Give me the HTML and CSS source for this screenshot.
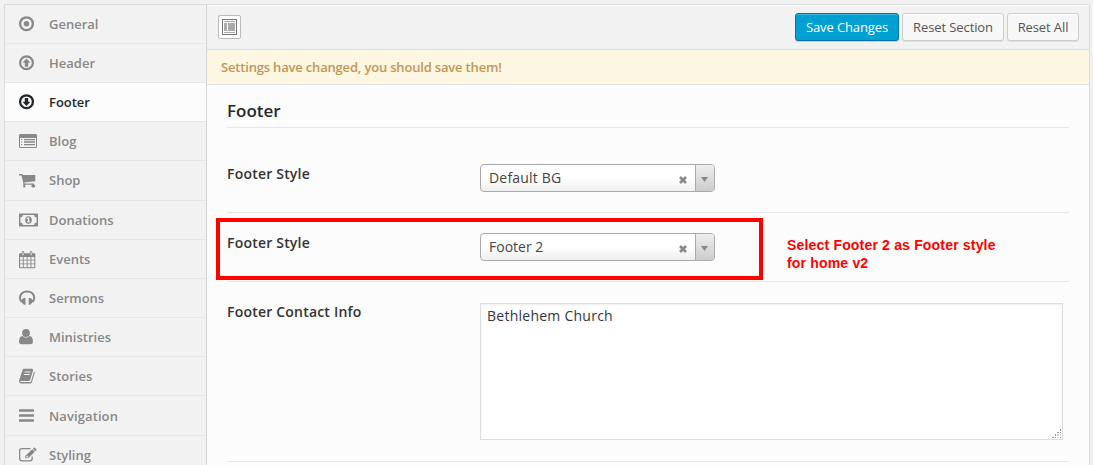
FILE: index.html
```html
<!DOCTYPE html>
<html lang="en">
<head>
<meta charset="utf-8">
<title>Theme Options</title>
<link rel="stylesheet" href="styles.css">
</head>
<body>
<div class="panel">
  <nav class="sidebar">
    <a class="item"><svg class="icon" viewBox="0 0 20 20"><circle cx="7.5" cy="7.7" r="6.4" fill="none" stroke="currentColor" stroke-width="2.3"/><circle cx="7.5" cy="7.7" r="2.7"/></svg>General</a>
    <a class="item"><svg class="icon" viewBox="0 0 20 20"><circle cx="7.5" cy="7.7" r="6.4" fill="none" stroke="currentColor" stroke-width="2.2"/><path d="M7.500 3.500L11.500 7.800H9.200V11.700H5.800V7.800H3.500Z"/></svg>Header</a>
    <a class="item active"><svg class="icon" viewBox="0 0 20 20"><circle cx="7.5" cy="7.700" r="6.400" fill="none" stroke="currentColor" stroke-width="2.300"/><path d="M7.500 12L11.500 7.700H9.200V3.900H5.800V7.700H3.500Z"/></svg>Footer</a>
    <a class="item"><svg class="icon" viewBox="0 0 20 20"><path fill-rule="evenodd" d="M1.5 1H16.5Q18 1 18 2.5V13.500Q18 15 16.500 15H1.500Q0 15 0 13.500V2.500Q0 1 1.500 1ZM1 5V13.500Q1 14 1.500 14H16.500Q17 14 17 13.500V5Z"/><path d="M2 6H3.200V7H2ZM5 6H16V7.200H5ZM2 8.500H3.200V9.500H2ZM5 8.300H16V9.700H5ZM2 11H3.200V12H2ZM5 11H16V12.200H5Z"/></svg>Blog</a>
    <a class="item"><svg class="icon" viewBox="0 0 20 20"><path d="M0 2H3.400L3.900 3.100H16.300V9.300L5.300 10.500L5.600 11.500H15V12.500H14.800A1.400 1.400 0 0 1 14.800 15.500H14A1.400 1.400 0 0 1 13.500 12.700H6.300V15.500H4.300V11L2.500 3.500H0Z"/></svg>Shop</a>
    <a class="item"><svg class="icon" viewBox="0 0 20 20"><path fill-rule="evenodd" d="M0 1.500H19V14.500H0ZM4 3Q3.700 5.100 1.400 5.500V10.500Q3.700 10.900 4 13H15Q15.300 10.900 17.600 10.500V5.500Q15.300 5.100 15 3Z"/><path fill-rule="evenodd" d="M9.500 4.200C14 4.200 14 11.800 9.500 11.800S5 4.200 9.500 4.200ZM9 5.300L7.500 6.600L8.100 7.300L9 6.800V9.300H8V10.300H11V9.300H10.200V5.300Z"/></svg>Donations</a>
    <a class="item"><svg class="icon" viewBox="0 0 20 20"><path fill-rule="evenodd" d="M1 2.200H2.600Q2.600 0 4 0T5.400 2.200H10.600Q10.600 0 12 0T13.400 2.200H15.500L16.300 3V16.500L15.500 17.300H.800L0 16.500V3ZM3.500 1.300V4.300H4.500V1.300ZM11.600 1.300V4.300H12.600V1.300ZM1.100 6V8.700H3.800V6ZM4.700 6V8.700H7.700V6ZM8.600 6V8.700H11.500V6ZM12.400 6V8.700H15.300V6ZM1.100 9.600V12.400H3.800V9.600ZM4.700 9.600V12.400H7.700V9.600ZM8.600 9.600V12.400H11.500V9.600ZM12.400 9.600V12.400H15.300V9.600ZM1.100 13.300V16.200H3.800V13.300ZM4.700 13.300V16.200H7.700V13.300ZM8.600 13.300V16.200H11.500V13.300ZM12.400 13.300V16.200H15.300V13.300Z"/></svg>Events</a>
    <a class="item"><svg class="icon" viewBox="0 0 20 20"><path d="M2.600 11.700C1.400 10.500 1 9.300 1 8C1 3.500 4.400 1.400 8.100 1.400S15.200 3.500 15.200 8C15.200 9.300 14.800 10.500 13.600 11.700" fill="none" stroke="currentColor" stroke-width="2"/><path d="M1.700 11.400L3.600 8.700L5 7.900H6.500V14.700H5L3.500 13.200ZM14.500 11.400L12.600 8.700L11.200 7.900H9.700V14.700H11.200L12.700 13.200Z"/></svg>Sermons</a>
    <a class="item"><svg class="icon" viewBox="0 0 20 20"><circle cx="7" cy="4" r="3.900"/><path d="M3.300 7.100Q7 10.300 10.700 7.100Q13.900 7.800 13.900 12.500Q13.900 15.200 11.500 15.200H2.500Q0 15.200 0 12.500Q.100 7.800 3.300 7.100Z"/></svg>Ministries</a>
    <a class="item"><svg class="icon" viewBox="0 0 20 20"><path fill-rule="evenodd" d="M5.200 .700H13Q14.500 .700 14 2.400L11.200 11.700Q10.800 12.900 9.500 12.900H2Q1.100 12.900 1.200 14H11.100Q11.900 14 12.200 13L15 3.500L15.900 4.400L13 14Q12.500 15.500 11.100 15.500H2Q0 15.200 0 12.900Q.200 12.200 1 9.700L3.300 2.700Q3.700 .700 5.200 .700ZM5.800 3.600L5.500 4.600H11.300L11.600 3.600ZM5.100 5.900L4.800 6.900H10.600L10.900 5.900Z"/></svg>Stories</a>
    <a class="item lower"><svg class="icon" viewBox="0 0 20 20"><path d="M.300 1.200H14.700L15 1.500V3.500L14.700 3.800H.300L0 3.500V1.500ZM.300 6.200H14.700L15 6.500V8.500L14.700 8.800H.300L0 8.500V6.500ZM.300 11.200H14.700L15 11.500V13.500L14.700 13.800H.300L0 13.500V11.500Z"/></svg>Navigation</a>
    <a class="item"><svg class="icon" viewBox="0 0 20 20"><path d="M11.500 1.700H3Q.600 1.700 .600 4.100V11.400Q.600 13.800 3 13.800H10.800Q13.200 13.800 13.200 11.400V9.500" fill="none" stroke="currentColor" stroke-width="1.300"/><path fill-rule="evenodd" d="M13.300 2.300L15.800 4.800L9.200 11.300H6.200V8.900ZM13.900 1.700L14.800 .800Q15.300 .300 15.900 .800L17.300 2.200Q17.700 2.700 17.300 3.300L16.400 4.200ZM8 8.600L7.200 9.400V10.500H8.700L9.500 9.900Z"/></svg>Styling</a>
  </nav>
  <main class="main">
    <header class="toolbar">
      <span class="expand"><svg width="15" height="16" viewBox="0 0 15 16"><rect x=".5" y=".5" width="14" height="15" fill="#fff" stroke="#777"/><path fill="#aaa" d="M2 2H13V3H2ZM2 4H5V12H2ZM6 4H13V12H6ZM2 13H13V14H2Z"/></svg></span>
      <div class="actions">
        <button class="button primary">Save Changes</button>
        <button class="button section">Reset Section</button>
        <button class="button all">Reset All</button>
      </div>
    </header>
    <div class="notice">Settings have changed, you should save them!</div>
    <div class="content">
      <h3 class="title">Footer</h3>
      <div class="field">
        <div class="label">Footer Style</div>
        <div class="select"><span class="value wide">Default BG</span><svg class="clear" viewBox="0 0 8 8"><path d="M1 1L7 7M7 1L1 7"/></svg><span class="arrow"></span></div>
      </div>
      <div class="field">
        <div class="label">Footer Style</div>
        <div class="select"><span class="value">Footer 2</span><svg class="clear" viewBox="0 0 8 8"><path d="M1 1L7 7M7 1L1 7"/></svg><span class="arrow"></span></div>
      </div>
      <div class="field tall">
        <div class="label">Footer Contact Info</div>
        <div class="textarea">Bethlehem Church<svg class="grip" width="10" height="10" viewBox="0 0 10 10"><path fill="#999" d="M8 0H9V2H8ZM5 3H7V4H5ZM8 3H9V4H8ZM3 5H4V7H3ZM0 8H2V9H0ZM3 8H4V9H3ZM8 8H9V9H8Z"/><path fill="#d0d0d0" d="M5 5H7V7H5ZM8 5H9V7H8ZM5 8H7V9H5Z"/></svg></div>
      </div>
    </div>
  </main>
</div>
<div class="highlight"></div>
<div class="hint">Select Footer 2 as Footer style<br>for home v2</div>
</body>
</html>
```
FILE: styles.css
```css
* { box-sizing: border-box; }
body {
  margin: 0;
  padding: 4px 3px 0 4px;
  height: 465px;
  overflow: hidden;
  background: #f1f1f1;
  font-family: "Open Sans", sans-serif;
}
.panel {
  display: flex;
  height: 480px;
  border: 1px solid #dcdcdc;
  background: #fcfcfc;
}
.sidebar {
  width: 202px;
  flex: none;
  border-right: 1px solid #d5d5d5;
  background: #f2f2f2;
}
.item {
  display: flex;
  height: 39.2px;
  padding: 0 0 1px 14px;
  border-bottom: 1px solid #e7e7e7;
  color: #888;
  font-size: 13px;
  font-weight: 600;
  line-height: 38px;
}
.item:first-child { margin-top: -0.4px; }
.item.active { background: #fcfcfc; color: #23282d; letter-spacing: -0.05px; }
.item.lower { padding-top: 1px; letter-spacing: 0.1px; }
.icon {
  width: 20px;
  height: 20px;
  margin: 11px 10px 0 0;
  fill: currentColor;
}
.main { flex: 1; min-width: 0; }
.toolbar {
  display: flex;
  justify-content: space-between;
  height: 45px;
  padding: 8px 10px 0 11px;
  border-bottom: 1px solid #dedede;
  background: #f2f2f2;
  box-shadow: inset 0 1px 0 #fcfcfc;
}
.expand {
  display: flex;
  align-items: center;
  justify-content: center;
  width: 23px;
  height: 24px;
  margin-top: 2px;
  border: 1px solid #bbb;
  border-radius: 2px;
  background: #fff;
}
.actions { display: flex; gap: 3px; }
.button {
  height: 28px;
  padding: 0;
  border: 1px solid #ccc;
  border-radius: 3px;
  background: #f7f7f7;
  box-shadow: inset 0 1px 0 #fff, 0 1px 0 rgba(0,0,0,.08);
  color: #555;
  font: 13px/26px "Open Sans", sans-serif;
  letter-spacing: -0.1px;
}
.primary {
  width: 104px;
  border-color: #0073aa;
  background: #00a0d2;
  box-shadow: inset 0 1px 0 rgba(120,200,230,.5), 0 1px 0 rgba(0,0,0,.15);
  color: #fff;
}
.section { width: 102px; }
.all { width: 72px; }
.notice {
  height: 35px;
  padding-left: 14px;
  border-bottom: 1px solid #e3e3e3;
  background: #fdf6e2;
  color: #c09853;
  font-size: 13px;
  font-weight: 600;
  line-height: 34px;
  letter-spacing: -0.18px;
}
.content { padding: 0 20px; }
.title {
  height: 43px;
  margin: 0 0 16px;
  padding-top: 14px;
  border-bottom: 1px solid #e7e7e7;
  color: #23282d;
  font-size: 17px;
  font-weight: 600;
  line-height: 23px;
}
.field {
  display: flex;
  height: 69px;
  padding-top: 20px;
  border-bottom: 1px solid #e7e7e7;
}
.tall { height: 180px; padding-top: 21px; }
.label {
  width: 253px;
  color: #333;
  font-size: 14px;
  font-weight: 600;
  line-height: 20px;
  letter-spacing: 0.2px;
}
.tall .label { margin-top: -1px; }
.select {
  display: flex;
  width: 235px;
  height: 28px;
  border: 1px solid #aaa;
  border-radius: 4px;
  background: linear-gradient(#fff 50%, #eee);
  overflow: hidden;
  color: #444;
  font-size: 14px;
  line-height: 26px;
}
.value { width: 190px; padding-left: 8px; }
.wide { letter-spacing: 0.2px; }
.clear {
  width: 8px;
  height: 8px;
  margin: 11px 8px 0;
  fill: none;
  stroke: #888;
  stroke-width: 2.7;
}
.arrow {
  display: flex;
  justify-content: center;
  flex: 1;
  padding-right: 1px;
  border-left: 1px solid #aaa;
  background: linear-gradient(#eee, #ccc);
}
.arrow::before {
  content: "";
  width: 7px;
  height: 5px;
  margin-top: 12px;
  background: #888;
  clip-path: polygon(0 0, 100% 0, 50% 100%);
}
.textarea {
  position: relative;
  width: 583px;
  height: 137px;
  padding: 2px 6px;
  border: 1px solid #ddd;
  background: #fff;
  box-shadow: inset 0 1px 2px rgba(0,0,0,.07);
  color: #32373c;
  font-size: 14px;
  line-height: 20px;
  letter-spacing: 0.25px;
}
.grip { position: absolute; right: 0; bottom: 0; }
.highlight {
  position: absolute;
  left: 216px;
  top: 218px;
  width: 547px;
  height: 62px;
  border: 4px solid #f00;
}
.hint {
  position: absolute;
  left: 787px;
  top: 236px;
  color: #f00;
  font: bold 14px/18px "Liberation Sans", Arial, sans-serif;
  letter-spacing: 0.18px;
  white-space: nowrap;
}
```
